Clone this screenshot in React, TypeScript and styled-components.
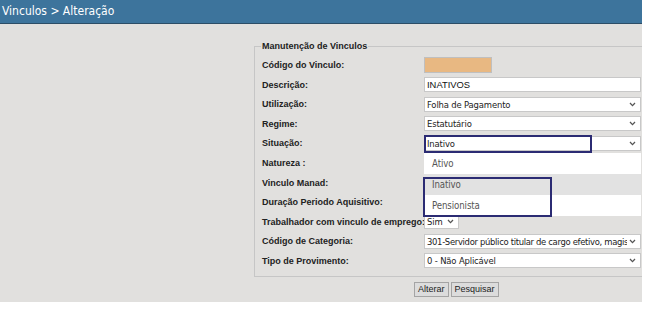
import styled, { createGlobalStyle } from "styled-components";

const GlobalStyle = createGlobalStyle`
  body {
    margin: 0;
    background: #fff;
    font-family: "Liberation Sans", Arial, sans-serif;
  }
`;

const Page = styled.div`
  width: 642px;
  overflow: hidden;
`;

const Header = styled.div`
  height: 23px;
  line-height: 23px;
  background: #3d749c;
  border-bottom: 1px solid #2c4d66;
  color: #fff;
  font-family: "DejaVu Sans Condensed", "Liberation Sans Narrow", sans-serif;
  font-size: 12px;
  padding-left: 2px;
`;

const Content = styled.div`
  box-sizing: border-box;
  height: 278px;
  background: #e1e0de;
  padding: 15.5px 0 0 254px;
`;

const Fieldset = styled.fieldset`
  width: 400px;
  min-width: 0;
  margin: 0;
  padding: 2.7px 0 5.2px 6px;
  border: 1px solid #c6c6c6;
`;

const Legend = styled.legend`
  padding: 0 1px;
  font-size: 9px;
  font-weight: bold;
  line-height: 13px;
  color: #222;
`;

const FormGrid = styled.div`
  display: grid;
  grid-template-columns: 162px 217px;
  grid-auto-rows: 19.6px;
  align-items: center;
  margin-left: 1px;
`;

const Label = styled.label`
  font-size: 9px;
  font-weight: bold;
  color: #222;
  white-space: nowrap;
`;

const Cell = styled.div`
  position: relative;
  display: flex;
  align-items: center;
`;

const CodeInput = styled.div`
  box-sizing: border-box;
  width: 68px;
  height: 16px;
  background: #e8b882;
  border: 1px solid #bfbfbf;
`;

const TextInput = styled.div`
  box-sizing: border-box;
  width: 217px;
  height: 15px;
  line-height: 13px;
  background: #fff;
  border: 1px solid #c8c8c8;
  padding-left: 2px;
  font-size: 9.4px;
  color: #111;
`;

const SelectBox = styled.div<{ $width?: number; $tight?: boolean }>`
  box-sizing: border-box;
  width: ${(p) => p.$width ?? 217}px;
  height: 15px;
  display: flex;
  align-items: center;
  gap: 2px;
  background: #fff;
  border: 1px solid #c8c8c8;
  padding: 0 4px 0 2px;
  font-family: "DejaVu Sans Condensed", "Liberation Sans Narrow", sans-serif;
  font-size: 9.4px;
  letter-spacing: ${(p) => (p.$tight ? "-0.32px" : "-0.15px")};
  color: #222;
  white-space: nowrap;
  overflow: hidden;
`;

const SelectValue = styled.span`
  flex: 1;
  min-width: 0;
  overflow: hidden;
`;

const Mark = styled.div<{ $w: number; $h: number; $top: number; $left: number }>`
  position: absolute;
  box-sizing: border-box;
  top: ${(p) => p.$top}px;
  left: ${(p) => p.$left}px;
  width: ${(p) => p.$w}px;
  height: ${(p) => p.$h}px;
  border: 2px solid #2b2b73;
  pointer-events: none;
  z-index: 3;
`;

const Dropdown = styled.ul`
  position: absolute;
  top: 17px;
  left: 0;
  width: 217px;
  margin: 0;
  padding: 0;
  list-style: none;
  background: #fff;
  z-index: 2;
`;

const Option = styled.li<{ $active?: boolean }>`
  height: 21px;
  line-height: 21px;
  padding-left: 8px;
  background: ${(p) => (p.$active ? "#e2e2e2" : "#fff")};
  font-family: "DejaVu Sans Condensed", "Liberation Sans Narrow", sans-serif;
  font-size: 9.6px;
  letter-spacing: -0.1px;
  color: #555;
`;

const ButtonRow = styled.div`
  display: flex;
  gap: 2px;
  margin: 5px 0 0 160px;
`;

const Button = styled.button`
  height: 15px;
  padding: 0 3px;
  background: #dcdcdc;
  border: 1px solid #a4a4a4;
  font-family: "Liberation Sans", Arial, sans-serif;
  font-size: 9px;
  color: #222;
`;

function Chevron() {
  return (
    <svg width="7" height="5" viewBox="0 0 7 5" style={{ flexShrink: 0 }}>
      <path d="M1 1 L3.5 3.6 L6 1" fill="none" stroke="#555" strokeWidth="1.3" />
    </svg>
  );
}

function Select({ value, width, tight }: { value: string; width?: number; tight?: boolean }) {
  return (
    <SelectBox $width={width} $tight={tight}>
      <SelectValue>{value}</SelectValue>
      <Chevron />
    </SelectBox>
  );
}

export default function App() {
  return (
    <Page>
      <GlobalStyle />
      <Header>Vinculos &gt; Alteração</Header>
      <Content>
        <Fieldset>
          <Legend>Manutenção de Vinculos</Legend>
          <FormGrid>
            <Label>Código do Vinculo:</Label>
            <Cell>
              <CodeInput />
            </Cell>

            <Label>Descrição:</Label>
            <Cell>
              <TextInput>INATIVOS</TextInput>
            </Cell>

            <Label>Utilização:</Label>
            <Cell>
              <Select value="Folha de Pagamento" />
            </Cell>

            <Label>Regime:</Label>
            <Cell>
              <Select value="Estatutário" />
            </Cell>

            <Label>Situação:</Label>
            <Cell>
              <Select value="Inativo" />
              <Mark $top={-1} $left={0} $w={168} $h={18} />
              <Dropdown>
                <Option>Ativo</Option>
                <Option $active>Inativo</Option>
                <Option>Pensionista</Option>
              </Dropdown>
              <Mark $top={41} $left={-1} $w={129} $h={40} />
            </Cell>

            <Label>Natureza :</Label>
            <Cell />

            <Label>Vinculo Manad:</Label>
            <Cell />

            <Label>Duração Periodo Aquisitivo:</Label>
            <Cell />

            <Label>Trabalhador com vinculo de emprego:</Label>
            <Cell>
              <Select value="Sim" width={35} />
            </Cell>

            <Label>Código de Categoria:</Label>
            <Cell>
              <Select value="301-Servidor público titular de cargo efetivo, magis" tight />
            </Cell>

            <Label>Tipo de Provimento:</Label>
            <Cell>
              <Select value="0 - Não Aplicável" />
            </Cell>
          </FormGrid>
        </Fieldset>
        <ButtonRow>
          <Button>Alterar</Button>
          <Button>Pesquisar</Button>
        </ButtonRow>
      </Content>
    </Page>
  );
}
